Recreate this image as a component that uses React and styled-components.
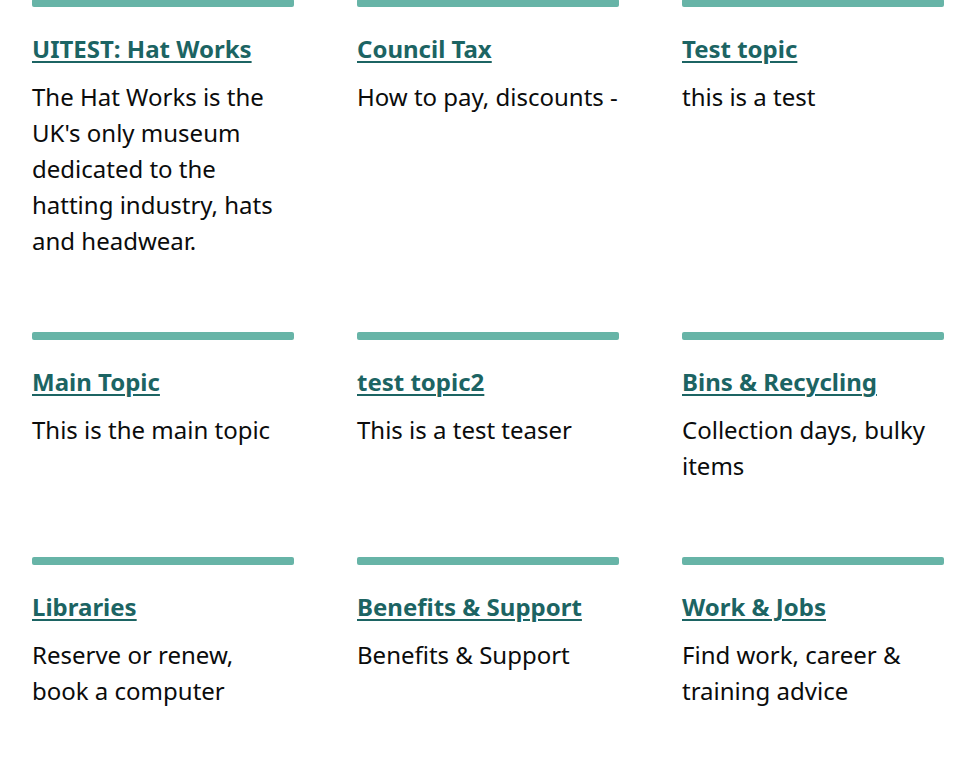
import React from "react";
import styled, { createGlobalStyle } from "styled-components";

const topics = [
  { title: "UITEST: Hat Works", teaser: "The Hat Works is the UK's only museum dedicated to the hatting industry, hats and headwear." },
  { title: "Council Tax", teaser: "How to pay, discounts -" },
  { title: "Test topic", teaser: "this is a test" },
  { title: "Main Topic", teaser: "This is the main topic" },
  { title: "test topic2", teaser: "This is a test teaser" },
  { title: "Bins & Recycling", teaser: "Collection days, bulky items" },
  { title: "Libraries", teaser: "Reserve or renew, book a computer" },
  { title: "Benefits & Support", teaser: "Benefits & Support" },
  { title: "Work & Jobs", teaser: "Find work, career & training advice" },
];

const GlobalStyle = createGlobalStyle`
  body {
    margin: 0;
    background: #fff;
    font-family: "Noto Sans", "Open Sans", Arial, sans-serif;
    color: #0b0c0c;
  }
`;

const Grid = styled.ul`
  list-style: none;
  margin: -1px 0 0;
  padding: 0 31px 0 32px;
  display: grid;
  grid-template-columns: repeat(3, 262px);
  column-gap: 63px;
`;

const Card = styled.li`
  padding-bottom: 73px;

  &::before {
    content: "";
    display: block;
    height: 8px;
    border-radius: 2px;
    background: #67b4a7;
    margin-bottom: 27px;
  }
`;

const Title = styled.a`
  display: block;
  font-size: 24px;
  line-height: 30px;
  font-weight: 700;
  color: #1c6463;
  text-decoration: underline;
  text-decoration-thickness: 2px;
  text-underline-offset: 3px;
  margin-bottom: 15px;
  cursor: pointer;
`;

const Teaser = styled.p`
  margin: 0;
  font-size: 24px;
  line-height: 36px;
`;

export default function App() {
  return (
    <>
      <GlobalStyle />
      <Grid>
        {topics.map((t) => (
          <Card key={t.title}>
            <Title href="#">{t.title}</Title>
            <Teaser>{t.teaser}</Teaser>
          </Card>
        ))}
      </Grid>
    </>
  );
}
